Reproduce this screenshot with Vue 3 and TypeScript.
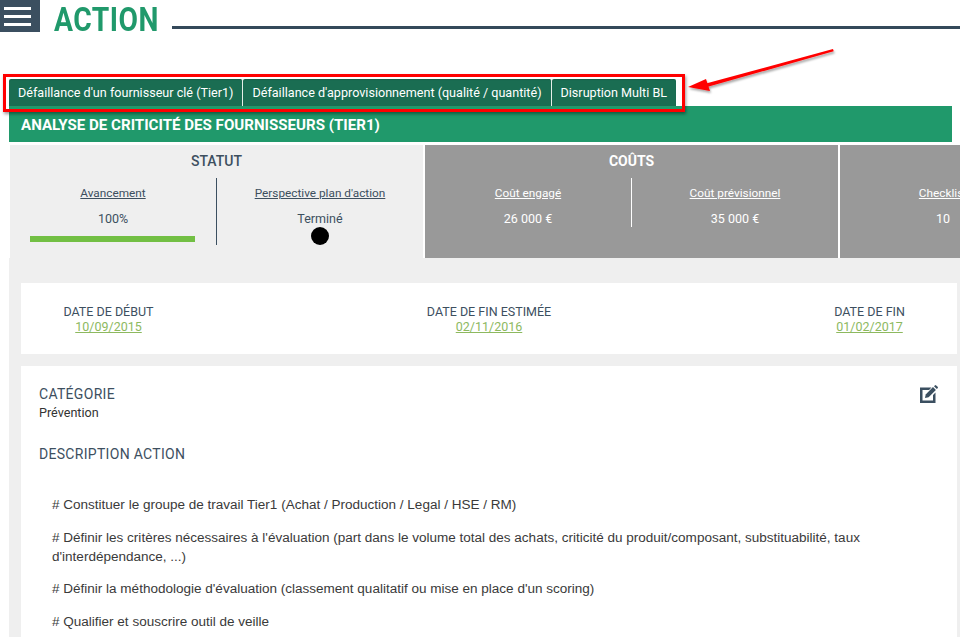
<script setup lang="ts">
const tabs: string[] = [
  "Défaillance d'un fournisseur clé (Tier1)",
  "Défaillance d'approvisionnement (qualité / quantité)",
  'Disruption Multi BL',
]
const dates = [
  { label: 'DATE DE DÉBUT', value: '10/09/2015' },
  { label: 'DATE DE FIN ESTIMÉE', value: '02/11/2016' },
  { label: 'DATE DE FIN', value: '01/02/2017' },
]
const paragraphs: string[] = [
  '# Constituer le groupe de travail Tier1 (Achat / Production / Legal / HSE / RM)',
  "# Définir les critères nécessaires à l'évaluation (part dans le volume total des achats, criticité du produit/composant, substituabilité, taux d'interdépendance, ...)",
  "# Définir la méthodologie d'évaluation (classement qualitatif ou mise en place d'un scoring)",
  '# Qualifier et souscrire outil de veille',
]
</script>

<template>
  <div class="page">
    <header class="top">
      <button class="burger" aria-label="Menu"><span></span><span></span><span></span></button>
      <h1>ACTION</h1>
      <div class="rule"></div>
    </header>

    <main class="content">
      <nav class="tabs">
        <div v-for="t in tabs" :key="t" class="tab">{{ t }}</div>
      </nav>
      <div class="banner">ANALYSE DE CRITICITÉ DES FOURNISSEURS (TIER1)</div>

      <div class="body">
        <section class="stats">
          <div class="stat light">
            <h2>STATUT</h2>
            <div class="cols">
              <div class="col">
                <a>Avancement</a>
                <p>100%</p>
                <div class="bar"></div>
              </div>
              <div class="col divided">
                <a>Perspective plan d'action</a>
                <p>Terminé</p>
                <div class="dot"></div>
              </div>
            </div>
          </div>
          <div class="stat dark">
            <h2>COÛTS</h2>
            <div class="cols short">
              <div class="col"><a>Coût engagé</a><p>26 000 €</p></div>
              <div class="col divided"><a>Coût prévisionnel</a><p>35 000 €</p></div>
            </div>
          </div>
          <div class="stat dark">
            <h2>&nbsp;</h2>
            <div class="cols short">
              <div class="col"><a>Checklist</a><p>10</p></div>
              <div class="col divided"></div>
            </div>
          </div>
        </section>

        <section class="card dates">
          <div v-for="d in dates" :key="d.label" class="date">
            <div class="date-label">{{ d.label }}</div>
            <a>{{ d.value }}</a>
          </div>
        </section>

        <section class="card detail">
          <svg class="edit" viewBox="0 0 18 18" width="18" height="18" aria-hidden="true">
            <path d="M0 2.500h11.500L9 5H2.500v10.500H13V10l2.500-2.500V18H0z" fill="#3b4f60" />
            <path d="M5 13l.7-3.600L13 2.100l2.900 2.900-7.300 7.300z" fill="#3b4f60" />
            <path d="M14 1.200l.8-.8a1 1 0 0 1 1.400 0l1.400 1.400a1 1 0 0 1 0 1.400l-.8.800z" fill="#3b4f60" />
          </svg>
          <h3>CATÉGORIE</h3>
          <div class="cat">Prévention</div>
          <h3 class="desc-title">DESCRIPTION ACTION</h3>
          <div class="desc">
            <p v-for="p in paragraphs" :key="p">{{ p }}</p>
          </div>
        </section>
      </div>
    </main>

    <div class="frame"></div>
    <svg class="arrow" width="160" height="60" viewBox="0 0 160 60" aria-hidden="true">
      <defs>
        <filter id="sh" x="-10%" y="-30%" width="120%" height="170%">
          <feDropShadow dx="1" dy="2" stdDeviation="1" flood-color="#000" flood-opacity=".35" />
        </filter>
      </defs>
      <g filter="url(#sh)" fill="#f00">
        <path d="M153 5l.7 2.300L27 43l-1-3.500z" />
        <path d="M8 43l18-8 4 12z" />
      </g>
    </svg>
  </div>
</template>

<style>
html, body { margin: 0; background: #fff; overflow: hidden; }
</style>

<style scoped>
.page {
  position: relative;
  width: 960px;
  height: 637px;
  overflow: hidden;
  background: #fff;
  font-family: Roboto, "Liberation Sans", sans-serif;
  font-size: 12px;
  color: #3d4f5f;
}
.top { display: flex; align-items: flex-start; height: 79px; }
.burger {
  width: 40px;
  height: 32px;
  padding: 7px 9px 0 4px;
  border: 0;
  background: #3b4f60;
  display: flex;
  flex-direction: column;
  gap: 5px;
  flex: none;
}
.burger span { display: block; height: 3px; background: #fff; }
h1 {
  flex: none;
  width: 104px;
  margin: 0 0 0 14px;
  font-size: 33px;
  line-height: 40px;
  font-weight: 700;
  color: #20996b;
  letter-spacing: .6px;
  white-space: nowrap;
  transform: scaleX(.855);
  transform-origin: left center;
}
.rule { flex: 1; height: 3px; margin: 26px 0 0 14px; background: #34495a; }

.content { margin-left: 9px; }
.tabs { display: flex; height: 27px; }
.tab {
  height: 27px;
  line-height: 27px;
  padding: 0 9px;
  background: #1a6d52;
  box-shadow: inset 0 1px 1px rgba(0, 0, 0, .12);
  color: #fff;
  font-size: 12.6px;
  white-space: nowrap;
  border-top-left-radius: 2px;
  border-top-right-radius: 2px;
  border-right: 1px solid #e6efe9;
  box-sizing: border-box;
}
.tab:last-child { border-right: 0; }
.banner {
  height: 36px;
  width: 943px;
  box-sizing: border-box;
  padding: 0 12px;
  background: #20996b;
  color: #fff;
  font-size: 15.1px;
  font-weight: 700;
  line-height: 38px;
}
.body {
  background: #efefef;
  width: 951px;
  height: 495px;
  overflow: hidden;
}
.stats { display: flex; gap: 2px; padding: 3px 0 0 1px; width: 1300px; height: 113px; background: #fff; }
.stat { width: 413px; height: 113px; box-sizing: border-box; flex: none; text-align: center; }
.stat.dark { background: #999; color: #fff; }
.stat.light { background: #efefef; }
.stat h2 { margin: 0; padding-top: 8px; height: 33px; box-sizing: border-box; font-size: 14px; font-weight: 500; line-height: 17px; }
.stat.dark h2 { font-weight: 700; }
.cols { display: flex; height: 67px; }
.cols.short { height: 49px; }
.col { flex: 1; min-width: 0; box-sizing: border-box; padding: 8px 20px 0; }
.col a { display: block; font-size: 11.8px; line-height: 15px; text-decoration: underline; white-space: nowrap; }
.col p { margin: 10px 0 0; font-size: 12.5px; line-height: 15px; }
.col.divided { border-left: 1px solid #3b4f60; }
.dark .col.divided { border-left-color: #fff; }
.bar { height: 6px; margin: 10px 1px 0 0; background: #72bf44; }
.dot { width: 18px; height: 18px; margin: 1px auto 0; border-radius: 50%; background: #000; }

.card { background: #fff; margin: 0 3px 0 12px; }
.dates {
  margin-top: 25px;
  height: 71px;
  box-sizing: border-box;
  padding-top: 21px;
  display: grid;
  grid-template-columns: 175px 1fr 175px;
  text-align: center;
}
.date-label { font-size: 12.5px; line-height: 15px; }
.date a { display: block; color: #8db95f; text-decoration: underline; font-size: 12.5px; line-height: 16px; }

.detail {
  position: relative;
  margin-top: 12px;
  height: 300px;
  padding: 20px 19px 0 18px;
}
.edit { position: absolute; top: 19px; right: 19px; }
h3 { margin: 0; font-size: 14px; font-weight: 400; line-height: 16px; letter-spacing: .3px; }
.cat { font-size: 12.6px; line-height: 15px; color: #333; margin-top: 3px; }
.desc-title { margin-top: 26px; }
.desc { margin-top: 33px; padding-left: 13px; width: 830px; color: #3a3a3a; font-family: "Liberation Sans", Arial, sans-serif; font-size: 13.52px; line-height: 19px; }
.desc p { margin: 0 0 13.7px; }

.frame {
  position: absolute;
  left: 3px;
  top: 74px;
  width: 676px;
  height: 32px;
  border: 3px solid #f00;
  box-shadow: 1px 2px 3px rgba(0, 0, 0, .4);
  pointer-events: none;
}
.arrow { position: absolute; left: 680px; top: 44px; }
</style>
